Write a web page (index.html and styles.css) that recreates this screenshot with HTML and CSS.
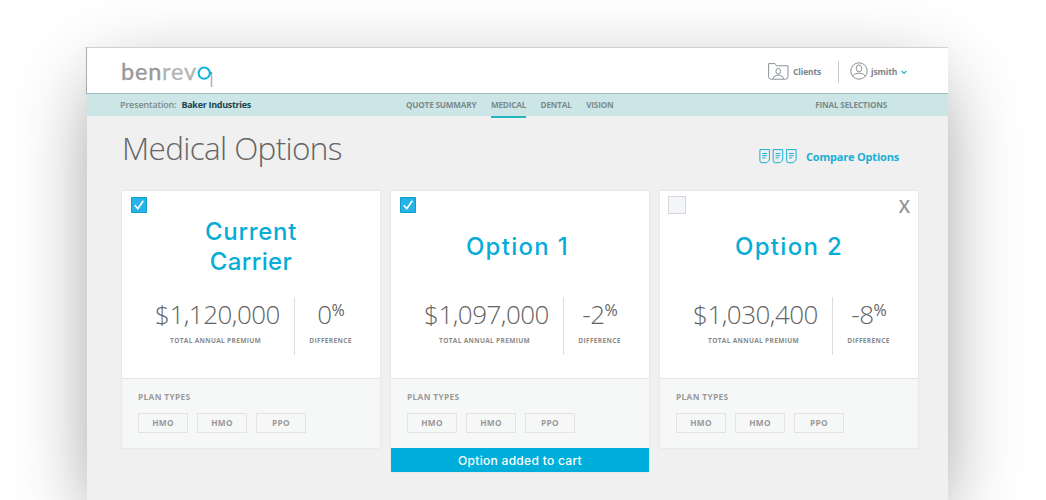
FILE: index.html
```html
<!DOCTYPE html>
<html lang="en">
<head>
<meta charset="utf-8">
<title>Medical Options</title>
<link rel="stylesheet" href="styles.css">
</head>
<body>
<div class="window">
  <header class="header">
    <div class="logo"><span class="logo-ben">ben</span><span class="logo-rev">rev</span><svg class="logo-mark" width="17" height="26" viewBox="0 0 17 26"><path d="M14.5 10V24" stroke="#b4b4b4" stroke-width="1.6"/><circle cx="7.2" cy="10.2" r="5.6" fill="none" stroke="#0bb2de" stroke-width="2"/><path d="M12 9.9h3" stroke="#0bb2de" stroke-width="2"/></svg></div>
    <div class="account">
      <svg class="folder" width="21" height="17" viewBox="0 0 21 17" fill="none" stroke="#8b9296" stroke-width="1"><path d="M.6 13.5V.6H7L8.6 2.8H20V13.5Q20 16.2 17.5 16.2H3.2Q.6 16.2.6 13.5Z"/><ellipse cx="10.2" cy="8.3" rx="2.3" ry="2.9"/><path d="M4.8 16Q4.8 13.2 8.8 12.3H11.6Q15.6 13.2 15.6 16"/></svg>
      <span class="clients">Clients</span>
      <span class="rule"></span>
      <svg class="avatar" width="18" height="18" viewBox="0 0 18 18" fill="none" stroke="#8b9296" stroke-width="1"><circle cx="9" cy="9" r="8.2"/><ellipse cx="9" cy="6.4" rx="2.7" ry="3.5"/><path d="M2.5 14.2Q4.2 11.6 7.3 11.3H10.7Q13.8 11.6 15.5 14.2"/></svg>
      <span class="user">jsmith</span>
      <svg class="chevron" width="6" height="5" viewBox="0 0 6 5" fill="none" stroke="#27b7c4" stroke-width="1.3"><path d="M.6 1L3 3.4 5.4 1"/></svg>
    </div>
  </header>
  <nav class="nav">
    <div class="presentation"><span>Presentation:</span><b>Baker Industries</b></div>
    <div class="tabs"><span>QUOTE SUMMARY</span><span class="active">MEDICAL</span><span>DENTAL</span><span>VISION</span></div>
    <div class="final">FINAL SELECTIONS</div>
  </nav>
  <div class="heading">
    <h1>Medical Options</h1>
    <div class="compare">
      <svg width="39" height="15" viewBox="0 0 39 15" fill="none" stroke="#18afd5" stroke-width="1"><g id="sheet"><path d="M.9.6H10.4V11L7.8 13.7H3Q.9 13.7.9 11.5Z"/><path d="M3.3 4.5H8M3.3 6.7H8M3.3 8.9H6.5"/></g><use href="#sheet" x="13.3"/><use href="#sheet" x="26.7"/></svg>
      <span>Compare Options</span>
    </div>
  </div>
  <main class="cards">
    <section class="card">
      <div class="top"><svg class="check" width="16" height="16" viewBox="0 0 16 16"><path d="M.5.5h15v15H.5z" fill="#26b4e8" stroke="#119fc9"/><path d="M3.8 8.3L6.8 11.7 12.3 3.8" fill="none" stroke="#fff" stroke-width="1.7"/></svg></div>
      <h2><span class="current">Current</span><span class="carrier">Carrier</span></h2>
      <div class="stats"><div class="premium"><strong>$1,120,000</strong><small>TOTAL ANNUAL PREMIUM</small></div><div class="diff"><strong>0<sup>%</sup></strong><small>DIFFERENCE</small></div></div>
      <div class="plans"><p>PLAN TYPES</p><div class="tags"><span>HMO</span><span>HMO</span><span>PPO</span></div></div>
    </section>
    <section class="card">
      <div class="top"><svg class="check" width="16" height="16" viewBox="0 0 16 16"><path d="M.5.5h15v15H.5z" fill="#26b4e8" stroke="#119fc9"/><path d="M3.8 8.3L6.8 11.7 12.3 3.8" fill="none" stroke="#fff" stroke-width="1.7"/></svg></div>
      <h2><span class="option first">Option 1</span></h2>
      <div class="stats"><div class="premium"><strong>$1,097,000</strong><small>TOTAL ANNUAL PREMIUM</small></div><div class="diff"><strong>-2<sup>%</sup></strong><small>DIFFERENCE</small></div></div>
      <div class="plans"><p>PLAN TYPES</p><div class="tags"><span>HMO</span><span>HMO</span><span>PPO</span></div></div>
      <div class="cart">Option added to cart</div>
    </section>
    <section class="card">
      <div class="top"><span class="box"></span><span class="close">X</span></div>
      <h2><span class="option">Option 2</span></h2>
      <div class="stats"><div class="premium"><strong>$1,030,400</strong><small>TOTAL ANNUAL PREMIUM</small></div><div class="diff"><strong>-8<sup>%</sup></strong><small>DIFFERENCE</small></div></div>
      <div class="plans"><p>PLAN TYPES</p><div class="tags"><span>HMO</span><span>HMO</span><span>PPO</span></div></div>
    </section>
  </main>
</div>
</body>
</html>
```
FILE: styles.css
```css
* { box-sizing: border-box; }
body { margin: 0; height: 500px; background: #fff; padding: 47px 98px 0 87px; font-family: "Open Sans", sans-serif; }
svg { display: block; flex: none; }
.window { width: 861px; height: 453px; background: #f0f0f0; box-shadow: 0 24px 76px -12px rgba(0,0,0,.46); }
.header { height: 47px; background: #fff; border-top: 1px solid #d0d0d0; border-bottom: 1px solid #9dbdc0; box-shadow: -1px 0 #aaa; display: flex; justify-content: space-between; padding: 0 41px 0 34px; }
.logo { display: flex; height: 45px; font: 400 23.5px/45px Lato, sans-serif; letter-spacing: .8px; padding-top: 1px; }
.logo-ben { color: #999; -webkit-text-stroke: .4px #999; }
.logo-rev { color: #b4b4b4; -webkit-text-stroke: .3px #b4b4b4; }
.logo-mark { margin: 14px 0 0 -.3px; }
.account { display: flex; align-items: center; height: 46px; color: #7d8589; font-size: 8.5px; font-weight: 700; letter-spacing: -.15px; }
.clients { margin-left: 4px; width: 27px; white-space: nowrap; }
.rule { width: 1px; height: 22px; background: #ccc; margin: 1px 11px 0 18px; }
.user { margin: 0 5px 0 3px; width: 25px; }
.chevron { margin-top: 2px; }
.nav { height: 22px; background: #cce6e7; color: #7b8a8c; display: flex; justify-content: space-between; padding: 0 61px 0 33px; font-size: 8.2px; font-weight: 700; line-height: 22px; white-space: nowrap; letter-spacing: -.2px; }
.presentation { width: 286px; display: flex; gap: 5px; font-size: 9px; font-weight: 600; letter-spacing: -.15px; }
.presentation b { color: #20454d; font-weight: 700; letter-spacing: -.3px; }
.tabs { display: flex; flex: 1; gap: 14.5px; }
.active { height: 24px; border-bottom: 2px solid #22b7c1; }
.heading { height: 75px; display: flex; justify-content: space-between; padding: 8px 49px 0 35px; }
h1 { margin: 0; font-size: 31.5px; font-weight: 300; line-height: 48px; color: #656565; letter-spacing: -.65px; }
.compare { display: flex; height: 16px; align-items: center; gap: 8px; margin-top: 24px; color: #17aed4; font-size: 11px; font-weight: 700; white-space: nowrap; letter-spacing: -.2px; }
.cards { display: grid; grid-template-columns: repeat(3, 258px); gap: 11px; padding-left: 35px; align-items: start; }
.card { background: #fff; box-shadow: 0 0 2px rgba(0,0,0,.1); }
.top { display: flex; height: 24px; padding: 6px 8px 0; justify-content: space-between; }
.check { margin-left: 1px; }
.box { width: 18px; height: 18px; background: #f4f5f8; border: 1px solid #d5d8da; margin-top: -1px; }
.close { font-size: 18px; line-height: 19px; font-weight: 600; color: #949494; }
h2 { height: 64px; margin: 0; display: flex; flex-direction: column; align-items: center; justify-content: center; font: 500 24px/30px Inter, sans-serif; color: #08add7; }
.current { letter-spacing: .7px; }
.carrier { letter-spacing: .4px; }
.option { letter-spacing: 1.3px; }
.first { margin-right: 5px; }
.stats { height: 99px; display: flex; padding: 18px 14px 23px 18px; text-align: center; }
.stats > div { display: flex; flex-direction: column; height: 58px; }
.premium { width: 155px; border-right: 1px solid #ddd; }
.diff { flex: 1; }
.stats strong { font-size: 26px; font-weight: 300; line-height: 35px; color: #636363; height: 39px; white-space: nowrap; letter-spacing: -.5px; }
.premium strong { padding-left: 1px; }
.stats sup { font-size: 16px; line-height: 1px; vertical-align: 8px; font-weight: 400; letter-spacing: -1px; }
.stats small { font-size: 6.6px; line-height: 9px; font-weight: 700; color: #8b8b8b; letter-spacing: .3px; white-space: nowrap; }
.premium small { padding-right: 3px; }
.plans { height: 70px; background: #f6f8f7; border-top: 1px solid #e4e5e5; padding: 12px 16px; }
.plans p { margin: 0; font-size: 8.3px; line-height: 12px; font-weight: 700; color: #999; letter-spacing: .35px; }
.tags { display: flex; gap: 9px; margin-top: 10px; }
.tags span { width: 50px; height: 20px; border: 1px solid #e4e2e3; text-align: center; font-size: 8.3px; line-height: 18px; font-weight: 700; color: #999; letter-spacing: .3px; }
.cart { height: 24px; background: #00aedb; color: #fff; text-align: center; font: 500 12px/25px Inter, sans-serif; letter-spacing: .3px; }
```
